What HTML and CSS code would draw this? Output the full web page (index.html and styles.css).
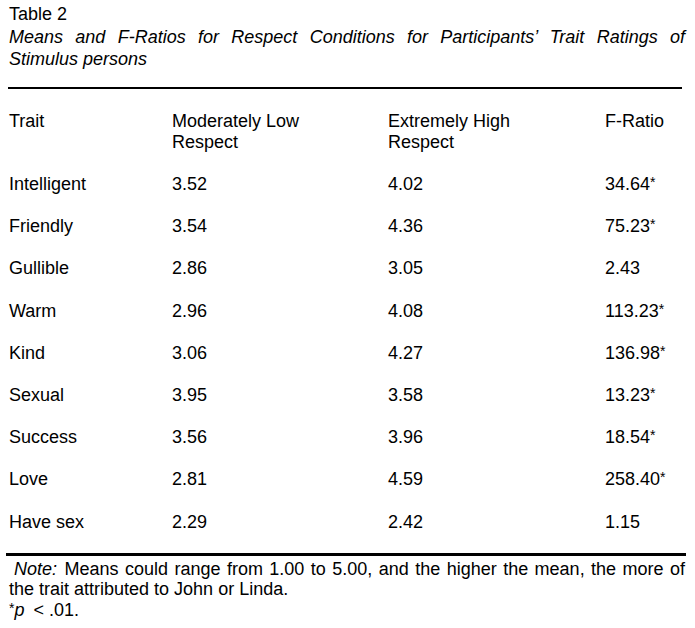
FILE: index.html
```html
<!DOCTYPE html>
<html lang="en">
<head>
<meta charset="utf-8">
<title>Table 2</title>
<link rel="stylesheet" href="styles.css">
</head>
<body>
<div class="page">
  <div class="caption">
    <div class="label">Table 2</div>
    <div class="title">Means and F-Ratios for Respect Conditions for Participants’ Trait Ratings of Stimulus persons</div>
  </div>
  <div class="rule-top"></div>
  <div class="table">
    <div class="head">Trait</div>
    <div class="head">Moderately Low<br>Respect</div>
    <div class="head">Extremely High<br>Respect</div>
    <div class="head">F-Ratio</div>

    <div class="cell">Intelligent</div><div class="cell">3.52</div><div class="cell">4.02</div><div class="cell">34.64<span class="star">*</span></div>
    <div class="cell">Friendly</div><div class="cell">3.54</div><div class="cell">4.36</div><div class="cell">75.23<span class="star">*</span></div>
    <div class="cell">Gullible</div><div class="cell">2.86</div><div class="cell">3.05</div><div class="cell">2.43</div>
    <div class="cell">Warm</div><div class="cell">2.96</div><div class="cell">4.08</div><div class="cell">113.23<span class="star">*</span></div>
    <div class="cell">Kind</div><div class="cell">3.06</div><div class="cell">4.27</div><div class="cell">136.98<span class="star">*</span></div>
    <div class="cell">Sexual</div><div class="cell">3.95</div><div class="cell">3.58</div><div class="cell">13.23<span class="star">*</span></div>
    <div class="cell">Success</div><div class="cell">3.56</div><div class="cell">3.96</div><div class="cell">18.54<span class="star">*</span></div>
    <div class="cell">Love</div><div class="cell">2.81</div><div class="cell">4.59</div><div class="cell">258.40<span class="star">*</span></div>
    <div class="cell">Have sex</div><div class="cell">2.29</div><div class="cell">2.42</div><div class="cell">1.15</div>
  </div>
  <div class="rule-bottom"></div>
  <div class="note">
    <p class="note-text"><span class="lead"></span><em class="note-label">Note:</em> Means could range from 1.00 to 5.00, and the higher the mean, the more of the trait attributed to John or Linda.</p>
    <p class="note-sig"><span class="star">*</span><em>p</em><span class="gap"></span>&lt; .01.</p>
  </div>
</div>
</body>
</html>
```
FILE: styles.css
```css
html, body {
  margin: 0;
  padding: 0;
  background: #ffffff;
}

body {
  font-family: "Liberation Sans", Arial, sans-serif;
  font-size: 18px;
  color: #000000;
}

.page {
  padding: 3px 10px 0 9px;
}

.caption {
  line-height: 22px;
}

.title {
  font-style: italic;
  text-align: justify;
  margin-top: 1px;
}

.rule-top {
  height: 2px;
  width: 674px;
  margin: 17px 0 0 -1px;
  background: #000000;
}

.table {
  display: grid;
  grid-template-columns: 163px 216px 217px auto;
  margin-top: 22px;
}

.head {
  line-height: 21px;
  padding-bottom: 10px;
}

.cell {
  line-height: 42.2px;
}

.star {
  font-size: 14px;
  line-height: 1;
  vertical-align: 3px;
}

.rule-bottom {
  height: 3px;
  width: 680px;
  margin: 10px 0 0 -3px;
  background: #000000;
}

.note {
  margin-top: 3px;
  line-height: 20.5px;
}

.note p {
  margin: 0;
}

.note-text {
  text-align: justify;
  margin-right: -1px;
}

.note-label {
  margin-right: 1px;
}

.lead {
  display: inline-block;
  width: 5px;
}

.gap {
  display: inline-block;
  width: 9px;
}
```
